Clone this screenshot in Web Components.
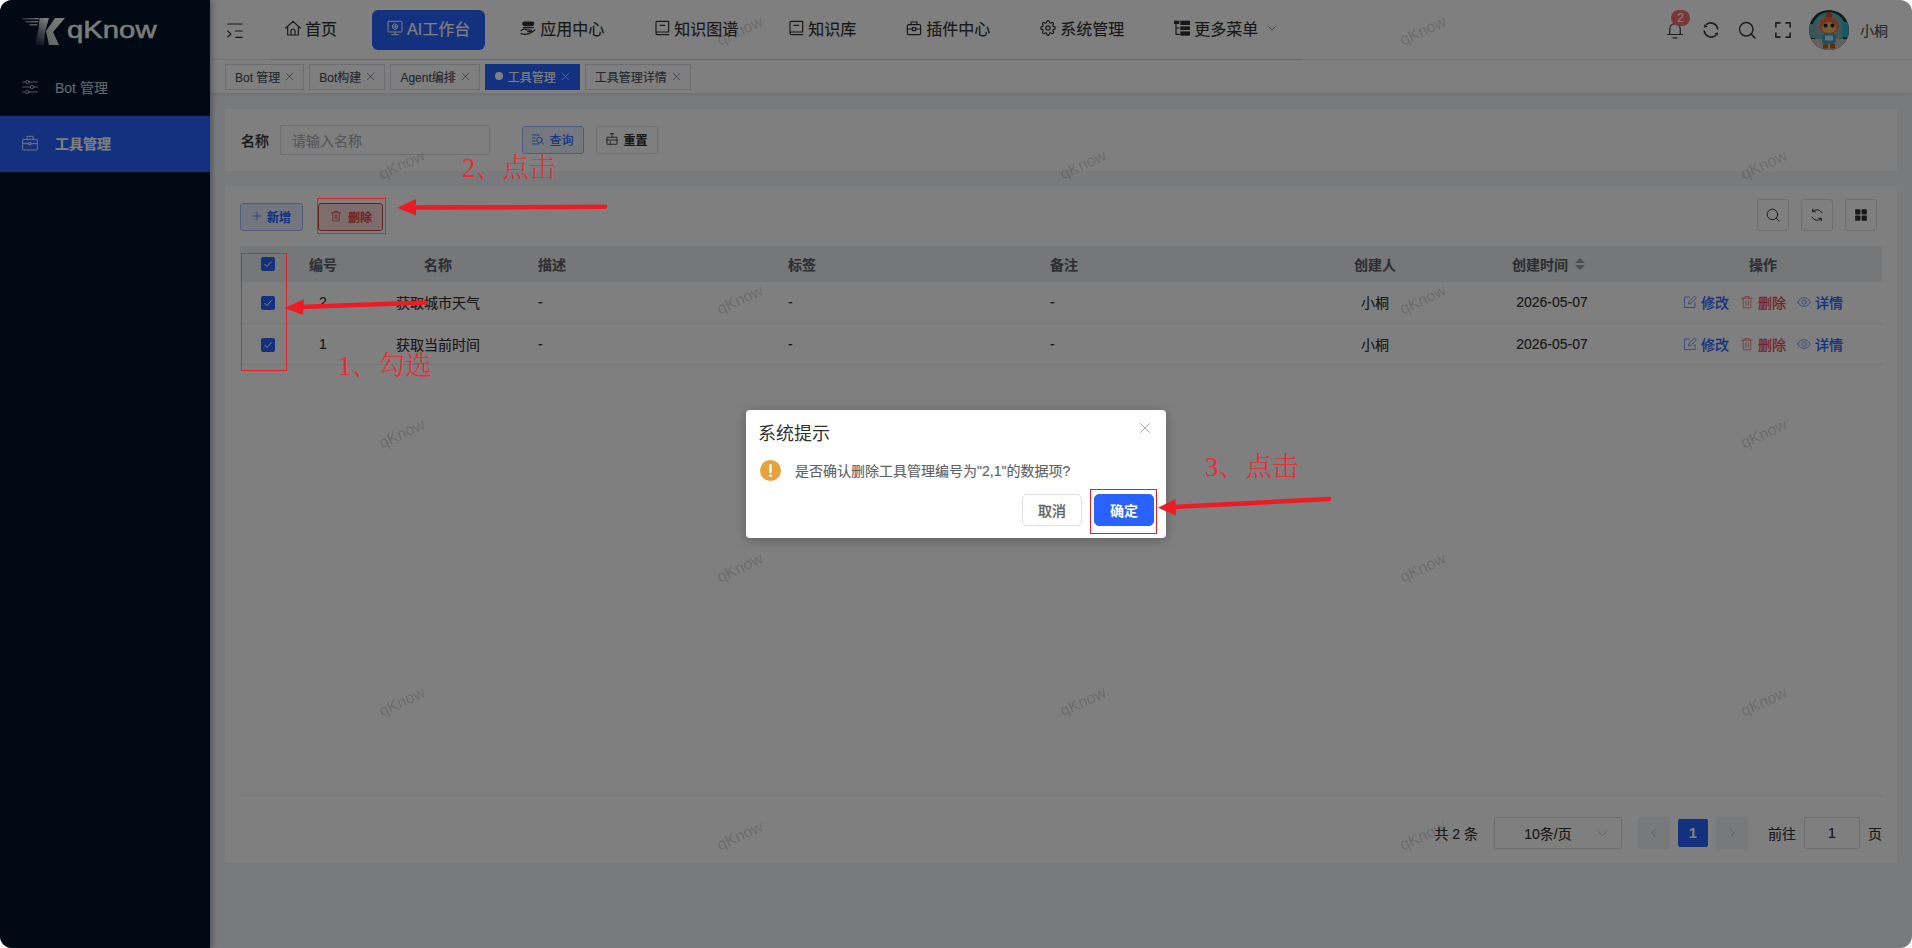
<!DOCTYPE html>
<html lang="zh-CN">
<head>
<meta charset="utf-8">
<title>qKnow</title>
<style>
html,body{margin:0;padding:0;background:#fff;}
body{font-family:"Liberation Sans","Noto Sans CJK SC",sans-serif;font-size:14px;color:#303133;}
</style>
</head>
<body>
<qk-shell>
  <qk-sidebar slot="side">
    <qk-side-item icon="sliders">Bot 管理</qk-side-item>
    <qk-side-item icon="case" active>工具管理</qk-side-item>
  </qk-sidebar>
  <qk-topbar>
    <qk-nav-item icon="home">首页</qk-nav-item>
    <qk-nav-item icon="monitor" active>AI工作台</qk-nav-item>
    <qk-nav-item icon="hand">应用中心</qk-nav-item>
    <qk-nav-item icon="book">知识图谱</qk-nav-item>
    <qk-nav-item icon="book">知识库</qk-nav-item>
    <qk-nav-item icon="plugin">插件中心</qk-nav-item>
    <qk-nav-item icon="gear">系统管理</qk-nav-item>
    <qk-nav-item icon="tree" more>更多菜单</qk-nav-item>
  </qk-topbar>
  <qk-tagbar>
    <qk-tag>Bot 管理</qk-tag>
    <qk-tag>Bot构建</qk-tag>
    <qk-tag>Agent编排</qk-tag>
    <qk-tag active>工具管理</qk-tag>
    <qk-tag>工具管理详情</qk-tag>
  </qk-tagbar>
  <qk-content>
    <qk-search-card></qk-search-card>
    <qk-table-card></qk-table-card>
  </qk-content>
  <qk-watermark slot="over"></qk-watermark>
  <qk-dialog slot="over"></qk-dialog>
  <qk-annotations slot="over"></qk-annotations>
</qk-shell>

<script>
const ICONS = {
  home:'<path d="M1 12 12 2l11 10M4 9.500V22.500h16V9.500M9 22.500v-6a3 3 0 0 1 6 0v6"/>',
  monitor:'<rect x="1.500" y="2" width="21" height="16" rx="1"/><path d="M7 22h10M12 18v4"/><circle cx="12" cy="10" r="1.600"/><path d="M12 5.800l3.600 2.100v4.200L12 14.200l-3.600-2.100V7.900z"/>',
  hand:'<path d="M7 3h11a2.800 2.800 0 0 1 0 5.600H7A2.800 2.800 0 0 1 7 3z" fill="currentColor"/><path d="M5 11.500h15"/><path d="M1.500 16c3-2.800 6-3 9-1.300h5c2.200 0 2.200 2.700 0 2.700h-4"/><path d="M1.500 20.500c6 2.500 12 1.500 21-5.500" />',
  book:'<path d="M3 19.500V3.500A1.500 1.500 0 0 1 4.500 2H22v16H5a2 2 0 0 0-2 2 2 2 0 0 0 2 2h17"/><path d="M9 8h7"/>',
  plugin:'<rect x="2" y="7" width="20" height="15" rx="2"/><path d="M7.500 7V3h9v4"/><rect x="9.500" y="11.500" width="5" height="4.500" rx=".5"/><path d="M2 13.500h7.500M14.500 13.500H22"/>',
  gear:'<circle cx="12" cy="12" r="3.200"/><path d="M19.400 15a1.650 1.650 0 0 0 .33 1.820l.06.06a2 2 0 0 1 0 2.830 2 2 0 0 1-2.830 0l-.06-.06a1.650 1.650 0 0 0-1.820-.33 1.650 1.650 0 0 0-1 1.510V21a2 2 0 0 1-2 2 2 2 0 0 1-2-2v-.09A1.650 1.650 0 0 0 9 19.400a1.650 1.650 0 0 0-1.820.33l-.06.06a2 2 0 0 1-2.830 0 2 2 0 0 1 0-2.830l.06-.06a1.650 1.650 0 0 0 .33-1.820 1.650 1.650 0 0 0-1.510-1H3a2 2 0 0 1-2-2 2 2 0 0 1 2-2h.09A1.650 1.650 0 0 0 4.600 9a1.650 1.650 0 0 0-.33-1.820l-.06-.06a2 2 0 0 1 0-2.830 2 2 0 0 1 2.830 0l.06.06a1.650 1.650 0 0 0 1.820.33H9a1.650 1.650 0 0 0 1-1.510V3a2 2 0 0 1 2-2 2 2 0 0 1 2 2v.09a1.650 1.650 0 0 0 1 1.510 1.650 1.650 0 0 0 1.820-.33l.06-.06a2 2 0 0 1 2.830 0 2 2 0 0 1 0 2.830l-.06.06a1.650 1.650 0 0 0-.33 1.820V9a1.650 1.650 0 0 0 1.510 1H21a2 2 0 0 1 2 2 2 2 0 0 1-2 2h-.09a1.650 1.650 0 0 0-1.510 1z"/>',
  tree:'<g fill="currentColor" stroke="none"><rect x="0" y="1" width="8" height="5"/><rect x="9.500" y="1" width="14.500" height="6.500"/><rect x="9.500" y="9.500" width="14.500" height="5.500"/><rect x="9.500" y="17" width="14.500" height="6.500"/></g><path d="M3 6v15.500H8M3 12H8"/>',
  sliders:'<path d="M1 4.500h22M1 12h22M1 19.500h22"/><circle cx="8" cy="4.500" r="2.500" fill="#001228"/><circle cx="15" cy="12" r="2.500" fill="#001228"/><circle cx="8" cy="19.500" r="2.500" fill="#001228"/>',
  case:'<rect x="1" y="6.500" width="22" height="16" rx="1.500"/><path d="M7.500 6.500V2h9v4.500M1 13h22"/><rect x="10.500" y="11.500" width="3" height="3" fill="#2962ff"/>',
  bell:'<path d="M5 18V10.500a7 7 0 0 1 14 0V18M2 18h20M9.500 22.500h5"/>',
  refresh:'<path d="M20.500 8.500A9.500 9.500 0 0 0 5 5.500M3.500 15.500A9.500 9.500 0 0 0 19 18.500"/><path d="M4.500 2v4.500h4.500M19.500 22v-4.500h-4.500"/>',
  search:'<circle cx="11" cy="11" r="9"/><path d="M17.500 17.500 22.500 22.500"/>',
  full:'<path d="M2.500 8V2.500H8M16 2.500h5.500V8M21.500 16v5.500H16M8 21.500H2.500V16"/>',
  trash:'<path d="M3 5.500h18M8.500 5.500V2.500h7v3M5.500 5.500V22h13V5.500M10 10v7.500M14 10v7.500"/>',
  edit:'<path d="M20.500 13v8.500h-18v-18H11"/><path d="M9.500 15l.8-4.200L20 2l3 3-9.300 9.200z"/>',
  eye:'<path d="M1 12c3-5 7-7.500 11-7.500S20 7 23 12c-3 5-7 7.500-11 7.500S4 17 1 12z"/><circle cx="12" cy="12" r="3.800"/>',
  query:'<path d="M1 4h13M1 10h6M1 16h5M1 22h13"/><circle cx="15" cy="14" r="5.500"/><path d="M19 18l4 4.500"/>',
  reset:'<path d="M12 1.500v6.500M8.500 1.500h7M2 14V8.500h20V14M2 14v8.500h20V14M8.500 17v5.500M2 14h20"/>',
  plus:'<path d="M12 3v18M3 12h18"/>',
  close:'<path d="M3 3 21 21M21 3 3 21"/>',
  chevD:'<path d="M3 8l9 9 9-9"/>',
  chevL:'<path d="M16 3 7 12l9 9"/>',
  chevR:'<path d="M8 3l9 9-9 9"/>',
  grid:'<g fill="currentColor" stroke="none"><rect x="2" y="2" width="9" height="9" rx="1"/><rect x="13" y="2" width="9" height="9" rx="1"/><rect x="2" y="13" width="9" height="9" rx="1"/><rect x="13" y="13" width="9" height="9" rx="1"/></g>',
  hamb:'<path d="M1 1.500h22M13 12h10M13 21.500h10M1 12l5 4.500-5 4.500"/>'
};

function def(name, css, html, init){
  customElements.define(name, class extends HTMLElement{
    constructor(){
      super();
      const r = this.attachShadow({mode:'open'});
      r.innerHTML = '<style>'+css+'</style>'+(typeof html==='function'?html(this):html);
      if(init) init(r,this);
    }
  });
}

customElements.define('qk-icon', class extends HTMLElement{
  constructor(){ super(); this.attachShadow({mode:'open'}); }
  connectedCallback(){
    const n=this.getAttribute('name'), s=this.getAttribute('size')||16, w=this.getAttribute('sw')||1.8;
    this.shadowRoot.innerHTML='<style>:host{display:inline-flex;flex:none;width:'+s+'px;height:'+s+'px}svg{display:block;width:100%;height:100%}</style><svg viewBox="0 0 24 24" fill="none" stroke="currentColor" stroke-width="'+w+'" stroke-linecap="round" stroke-linejoin="round">'+ICONS[n]+'</svg>';
  }
});

def('qk-shell',
 ':host{display:grid;grid-template-columns:210px 1702px;grid-template-rows:60px 33px 855px;position:relative;width:1912px;height:948px;overflow:hidden;border-radius:12px;background:#f2f5f8;-webkit-text-stroke:.15px}'+
 '.side{grid-row:1/4;display:flex;position:relative;z-index:2}',
 '<div class="side"><slot name="side"></slot></div><slot></slot><slot name="over"></slot>');

def('qk-sidebar',
 ':host{display:flex;flex-direction:column;width:210px;background:#001228;box-shadow:2px 0 6px rgba(0,21,41,.35)}'+
 '.logo{height:60px;flex:none;position:relative;display:flex;align-items:flex-start;padding:18px 0 0 22px;box-sizing:border-box;color:#fff}'+
 '.t{display:inline-block;font-size:24px;line-height:28px;color:#f6f6f6;-webkit-text-stroke:.5px #f6f6f6;margin:-2px 0 0 2px;transform:scaleX(1.220);transform-origin:0 50%;}'+
 'svg{display:block;flex:none}',
 '<div class="logo"><svg width="43" height="28" viewBox="0 0 43 28"><defs><linearGradient id="a" x1="0" x2="1" y1="0" y2="0"><stop offset="0" stop-color="#fff" stop-opacity=".3"/><stop offset="1" stop-color="#fff" stop-opacity=".85"/></linearGradient><linearGradient id="b" x1="0.300" y1="1" x2="0.600" y2="0"><stop offset="0" stop-color="#fff" stop-opacity=".1"/><stop offset=".55" stop-color="#fff" stop-opacity=".55"/><stop offset="1" stop-color="#fff" stop-opacity=".95"/></linearGradient><linearGradient id="c" x1="0" y1="1" x2="1" y2="0"><stop offset="0" stop-color="#fff" stop-opacity=".75"/><stop offset="1" stop-color="#fff"/></linearGradient></defs>'+
 '<path d="M0 0H17L16.600 1.500H1zM3 3H16.400L16 4.500H4zM7 6H15.500L15 7.500H8z" fill="url(#a)"/><path d="M17.500 0H27L23 14 22 27H13L16.500 11z" fill="url(#b)"/><path d="M33 0H43L31 14 37 27H27L24 13z" fill="url(#c)"/></svg><span class="t">qKnow</span></div><slot></slot>');

def('qk-side-item',
 ':host{display:flex;align-items:center;height:56px;padding:0 0 2px 22px;box-sizing:border-box;gap:17px;font-size:14px;color:#bfcbd9;flex:none}'+
 ':host([active]){background:#2962ff;color:#fff;font-weight:700}',
 e=>'<qk-icon name="'+e.getAttribute('icon')+'" size="16" sw="1.300"></qk-icon><span><slot></slot></span>');

def('qk-topbar',
 ':host{display:flex;align-items:stretch;grid-column:2;grid-row:1;background:#fff;box-sizing:border-box;height:60px;border-bottom:1px solid #f0f0f0;color:#303133}'+
 '.h{width:16px;margin:23px 27px 0 17px;height:16px}'+
 'nav{display:flex;align-items:center;gap:20px;width:1032px;border-bottom:1px solid #d8dadf;margin-bottom:-1px;box-sizing:border-box}'+
 '.r{margin-left:auto;display:flex;align-items:center;padding-right:24px;font-size:14px;color:#555}'+
 '.i{position:relative;width:18px;height:18px;margin-right:18px;color:#3c3c3c;margin-top:1px}'+
 '.badge{position:absolute;left:5px;top:-11px;width:19px;height:16px;border-radius:8px;background:#f56c6c;color:#fff;font-size:12px;line-height:16px;text-align:center}'+
 '.av{width:40px;height:40px;border-radius:50%;overflow:hidden;margin:0 11px 0 -1px}',
 '<qk-icon class="h" name="hamb" size="16" sw="1.700"></qk-icon><nav><slot></slot></nav><div class="r">'+
 '<div class="i"><qk-icon name="bell" size="18" sw="1.600"></qk-icon><span class="badge">2</span></div>'+
 '<div class="i"><svg width="18" height="18" viewBox="0 0 24 24" fill="none" stroke="currentColor" stroke-width="2.200" stroke-linecap="round"><path d="M21 10.500A9.500 9.500 0 0 0 6 4.500M3 13.500A9.500 9.500 0 0 0 18 19.500"/><path d="M2.500 9l1-5 4 3.500zM21.500 15l-1 5-4-3.500z" fill="currentColor" stroke="none"/></svg></div>'+
 '<div class="i"><qk-icon name="search" size="18" sw="2"></qk-icon></div>'+
 '<div class="i"><qk-icon name="full" size="18" sw="2.200"></qk-icon></div>'+
 '<div class="av"><svg width="40" height="40" viewBox="0 0 40 40"><rect width="40" height="40" fill="#2b2f33"/><circle cx="20" cy="19" r="15.500" fill="#8fa4a8" stroke="#39bfc9" stroke-width="2.500"/><rect x="0" y="14" width="7" height="14" fill="#69adb5"/><rect x="33" y="12" width="7" height="15" fill="#2fb2c4"/><rect x="0" y="29" width="40" height="11" fill="#c9c2bb"/><path d="M20 1.500c2.500 1 3.500 3.500 2.800 6.500h-5.600C16.500 5 17.500 3 20 1.500z" fill="#e2452a"/><ellipse cx="20" cy="15.500" rx="9.500" ry="8.500" fill="#ef6a3c"/><ellipse cx="20" cy="17.500" rx="7" ry="5.500" fill="#f7b26a"/><circle cx="16.500" cy="15.500" r="2" fill="#1c1c1c"/><circle cx="23.500" cy="15.500" r="2" fill="#1c1c1c"/><path d="M17.500 18.500h5l-2.500 3.500z" fill="#f6c21c"/><rect x="13" y="23.500" width="14" height="10" rx="3" fill="#3f9fc6"/><rect x="16" y="25.500" width="8" height="5" rx="1" fill="#bfe6f2"/><rect x="14" y="33.500" width="5" height="5" fill="#b4621f"/><rect x="21" y="33.500" width="5" height="5" fill="#b4621f"/></svg></div>'+
 '<span>小桐</span></div>');

def('qk-nav-item',
 ':host{display:inline-flex;align-items:center;gap:4px;height:40px;padding:0 15px 3px;font-size:16px;border-radius:6px;color:#303133;white-space:nowrap;box-sizing:border-box}'+
 ':host([active]){background:#2962ff;color:#fff}'+
 '.c{margin-left:5px;color:#606266}',
 e=>'<qk-icon name="'+e.getAttribute('icon')+'" size="16" sw="'+(e.getAttribute('icon')==='monitor'?1.500:1.800)+'"></qk-icon><span><slot></slot></span>'+(e.hasAttribute('more')?'<qk-icon class="c" name="chevD" size="10" sw="1.800"></qk-icon>':''));

def('qk-tagbar',
 ':host{display:flex;align-items:flex-start;gap:5px;grid-column:2;grid-row:2;background:#fff;padding:4px 0 0 15px;box-sizing:border-box;height:33px;box-shadow:0 1px 4px rgba(0,21,41,.12);position:relative;z-index:1}',
 '<slot></slot>');

def('qk-tag',
 ':host{display:inline-flex;align-items:center;height:26px;box-sizing:border-box;padding:0 9px 2px;border:1px solid #d8dce5;font-size:12px;color:#495060;background:#fff;white-space:nowrap}'+
 ':host([active]){background:#2962ff;border-color:#2962ff;color:#fff}'+
 '.d{width:8px;height:8px;border-radius:50%;background:#fff;margin-right:5px}'+
 'qk-icon{margin-left:5px}',
 e=>(e.hasAttribute('active')?'<span class="d"></span>':'')+'<span><slot></slot></span><qk-icon name="close" size="9" sw="1.600"></qk-icon>');

def('qk-content',
 ':host{display:flex;flex-direction:column;gap:15px;grid-column:2;grid-row:3;padding:16px 15px 85px;box-sizing:border-box;min-height:0}',
 '<slot></slot>');

def('qk-btn',
 ':host{display:inline-flex;align-items:center;justify-content:center;gap:5px;height:28px;padding-bottom:2px;box-sizing:border-box;border:1px solid #dcdfe6;border-radius:3px;background:#fff;font-size:12px;color:#303133;font-weight:700;white-space:nowrap}'+
 ':host([kind=query]){background:#ebf1ff;border-color:#9db9ff;color:#2962ff;font-weight:400;-webkit-text-stroke:.2px}'+
 ':host([kind=add]){background:#e6edff;border-color:#9db9ff;color:#2962ff}'+
 ':host([kind=del]){background:#fbdada;border-color:#d23f3f;color:#e64a4a;gap:6px;padding-left:1px}',
 e=>'<qk-icon name="'+e.getAttribute('icon')+'" size="'+(e.getAttribute('isize')||12)+'" sw="1.700"></qk-icon><span><slot></slot></span>');

def('qk-search-card',
 ':host{display:flex;align-items:center;height:62px;flex:none;padding-left:16px;box-sizing:border-box;background:#fff;font-size:14px}'+
 'label{color:#303133;width:39px;-webkit-text-stroke:.35px}'+
 '.in{display:flex;align-items:center;width:210px;height:30px;box-sizing:border-box;border:1px solid #d8dce5;border-radius:2px;padding-left:11px;color:#a8abb2;font-size:14px}'+
 'qk-btn{margin-left:12px}qk-btn.q{margin-left:32px;width:62px}qk-btn.z{width:62px}',
 '<label>名称</label><div class="in">请输入名称</div><qk-btn class="q" kind="query" icon="query">查询</qk-btn><qk-btn class="z" icon="reset">重置</qk-btn>');

def('qk-tool-btn',
 ':host{display:inline-flex;align-items:center;justify-content:center;width:32px;height:32px;box-sizing:border-box;border:1px solid #d8dce5;border-radius:3px;background:#fff;color:#303133}',
 e=>'<qk-icon name="'+e.getAttribute('icon')+'" size="14" sw="1.700"></qk-icon>');

def('qk-check',
 ':host{display:inline-flex;width:14px;height:14px;background:#2962ff;border-radius:2px;align-items:center;justify-content:center;color:#fff}',
 '<svg width="10" height="10" viewBox="0 0 10 10" fill="none" stroke="currentColor" stroke-width="1"><path d="M1.500 5 4 7.500 8.500 2.500"/></svg>');

const COLS='56px 54px 176px 250px 262px 252px 170px 184px 238px';
def('qk-table-card',
 ':host{display:flex;flex-direction:column;flex:1;min-height:0;background:#fff;padding:17px 15px 0;box-sizing:border-box}'+
 '.tb{display:flex;align-items:center;height:28px;margin-bottom:15px;position:relative}'+
 '.tb qk-btn.a{width:63px}.tb qk-btn.b{width:65px;margin-left:15px}'+
 '.tools{margin-left:auto;display:flex;gap:12px;margin-top:-4px;margin-right:5px;align-items:center}'+
 '.row{display:grid;grid-template-columns:'+COLS+';align-items:center;height:41.500px;box-sizing:border-box;border-bottom:1px solid #e8eaf0;font-size:14px;color:#303133}'+
 '.head{height:36px;background:#eceef3;font-weight:700;color:#5a5e66;border:0}'+
 '.c{text-align:center}.l{padding-left:12px}'+
 '.cell{display:flex;justify-content:center;align-items:center}'+
 '.body .cell{padding-top:2px}'+
 '.sort{width:24px;display:flex;justify-content:center}'+
 '.act{display:flex;justify-content:center;gap:11px}'+
 '.act span{display:inline-flex;align-items:center;gap:4px;color:#2962ff;-webkit-text-stroke:.3px}.act .d{color:#e64a4a}'+
 '.act qk-icon{opacity:.75}'+
 '.pg{margin-top:auto}',
 ()=>{
  const row=(n,name)=>'<div class="row body"><div class="cell"><qk-check></qk-check></div><div class="c">'+n+'</div><div class="c">'+name+'</div><div class="l">-</div><div class="l">-</div><div class="l">-</div><div class="c">小桐</div><div class="c">2026-05-07</div>'+
   '<div class="act"><span><qk-icon name="edit" size="14" sw="1.500"></qk-icon>修改</span><span class="d"><qk-icon name="trash" size="14" sw="1.500"></qk-icon>删除</span><span><qk-icon name="eye" size="14" sw="1.500"></qk-icon>详情</span></div></div>';
  return '<div class="tb"><qk-btn class="a" kind="add" icon="plus" isize="10">新增</qk-btn><qk-btn class="b" kind="del" icon="trash">删除</qk-btn>'+
   '<div class="tools"><qk-tool-btn icon="search"></qk-tool-btn><qk-tool-btn icon="refresh"></qk-tool-btn><qk-tool-btn icon="grid"></qk-tool-btn></div></div>'+
   '<div class="row head"><div class="cell"><qk-check></qk-check></div><div class="c">编号</div><div class="c">名称</div><div class="l">描述</div><div class="l">标签</div><div class="l">备注</div><div class="c">创建人</div><div class="cell">创建时间<span class="sort"><svg width="10" height="12" viewBox="0 0 10 12" fill="#9a9da3"><path d="M5 0 10 5H0zM5 12 0 7h10z"/></svg></span></div><div class="c">操作</div></div>'+
   row(2,'获取城市天气')+row(1,'获取当前时间')+'<qk-pagination class="pg"></qk-pagination>';
 });

def('qk-pagination',
 ':host{display:flex;align-items:center;height:68px;box-sizing:border-box;padding:6px 0 0;border-top:1px solid #e8eaf0;font-size:14px;color:#303133;justify-content:flex-end}'+
 '.t{margin-right:16px}'+
 '.sel{width:128px;height:32px;border:1px solid #d8dce5;border-radius:2px;box-sizing:border-box;display:flex;align-items:center;position:relative;justify-content:center;padding-right:20px;margin-right:16px}'+
 '.sel qk-icon{position:absolute;right:13px;top:10px;color:#a0a3a9}'+
 '.nb{width:32px;height:32px;background:#f0f2f5;border-radius:2px;display:flex;align-items:center;justify-content:center;color:#b0b3b8}'+
 '.p{width:30px;height:28px;background:#2962ff;color:#fff;font-weight:700;border-radius:2px;display:flex;align-items:center;justify-content:center;margin:0 8px}'+
 '.j{margin-left:20px;margin-right:8px}'+
 '.in{width:56px;height:32px;box-sizing:border-box;border:1px solid #d8dce5;border-radius:2px;display:flex;align-items:center;justify-content:center;margin-right:8px}',
 '<span class="t">共 2 条</span><div class="sel">10条/页<qk-icon name="chevD" size="11" sw="1.500"></qk-icon></div><div class="nb"><qk-icon name="chevL" size="10" sw="1.800"></qk-icon></div><div class="p">1</div><div class="nb"><qk-icon name="chevR" size="10" sw="1.800"></qk-icon></div><span class="j">前往</span><div class="in">1</div><span>页</span>');

def('qk-watermark',
 ':host{position:absolute;inset:0;pointer-events:none;z-index:3;display:block;-webkit-text-stroke:0}'+
 'span{position:absolute;width:60px;text-align:center;margin:-10px 0 0 -30px;font-size:16px;line-height:20px;color:rgba(0,0,0,.17);transform:rotate(-25deg)}',
 ()=>{
  let h='';
  const ys=[31,165,300,434,568,702,836];
  ys.forEach((y,i)=>{
    (i%2?[402,1083,1764]:[740,1423]).forEach(x=>{h+='<span style="left:'+x+'px;top:'+y+'px">qKnow</span>';});
  });
  return h;
 });

def('qk-dialog',
 ':host{position:absolute;inset:0;z-index:4;background:rgba(0,0,0,.5);display:flex;align-items:center;justify-content:center}'+
 '.b{width:420px;height:128px;background:#fff;border-radius:4px;box-shadow:0 2px 12px rgba(0,0,0,.25);box-sizing:border-box;position:relative;display:flex;flex-direction:column}'+
 '.h{height:43px;padding:15px 0 0 12px;box-sizing:border-box;font-size:18px;line-height:18px;color:#303133;-webkit-text-stroke:0}'+
 '.x{position:absolute;right:15px;top:12px;color:#7d8086}'+
 '.m{height:34px;display:flex;align-items:center;padding-left:14px;gap:14px;font-size:14px;color:#606266}'+
 '.f{display:flex;justify-content:flex-end;gap:12px;padding-right:12px;margin-top:7px}'+
 '.bt{width:60px;height:32px;box-sizing:border-box;border-radius:5px;display:flex;align-items:center;justify-content:center;font-size:14px;border:1px solid #dcdfe6;color:#606266;background:#fff;-webkit-text-stroke:.4px}'+
 '.ok{background:#2962ff;border-color:#2962ff;color:#fff;font-weight:700;-webkit-text-stroke:0}',
 '<div class="b"><div class="h">系统提示</div><qk-icon class="x" name="close" size="12" sw="1.300"></qk-icon>'+
 '<div class="m"><svg width="21" height="21" viewBox="0 0 21 21"><circle cx="10.500" cy="10.500" r="10.500" fill="#e6a23c"/><rect x="9.300" y="4" width="2.400" height="9" rx="1" fill="#fff"/><circle cx="10.500" cy="15.700" r="1.400" fill="#fff"/></svg><span>是否确认删除工具管理编号为"2,1"的数据项?</span></div>'+
 '<div class="f"><div class="bt">取消</div><div class="bt ok">确定</div></div></div>');

def('qk-annotations',
 ':host{position:absolute;inset:0;z-index:5;pointer-events:none;display:block;font-family:"Liberation Serif","Noto Serif CJK SC","Noto Sans CJK SC",serif;color:#ed2a32;font-size:26.800px;font-weight:300;-webkit-text-stroke:0}'+
 'span{position:absolute;line-height:30px;white-space:nowrap}svg{position:absolute;left:0;top:0}',
 '<svg width="1912" height="948" viewBox="0 0 1912 948">'+
 '<g fill="none" stroke="#ed1c24" stroke-width="1">'+
 '<rect x="241.500" y="253.500" width="45" height="117"/><rect x="317.500" y="198.500" width="68" height="35"/><rect x="1090.500" y="489.500" width="66" height="44"/></g>'+
 '<g fill="none" stroke="#ed1c24" stroke-width="4.500" stroke-linecap="round"><path d="M425 302.500 300 307"/><path d="M605 206.800 414 207.600"/><path d="M1329 499 1173 507"/></g>'+
 '<g fill="#ed1c24"><path d="M284.500 308 304 299 303 315z"/><path d="M397 207.700 416 199 416 215.600z"/><path d="M1158 507.700 1175.600 499 1176 515.700z"/></g></svg>'+
 '<span style="left:338px;top:351px">1、勾选</span><span style="left:462px;top:153px">2、点击</span><span style="left:1205px;top:452px">3、点击</span>');
</script>
</body>
</html>
